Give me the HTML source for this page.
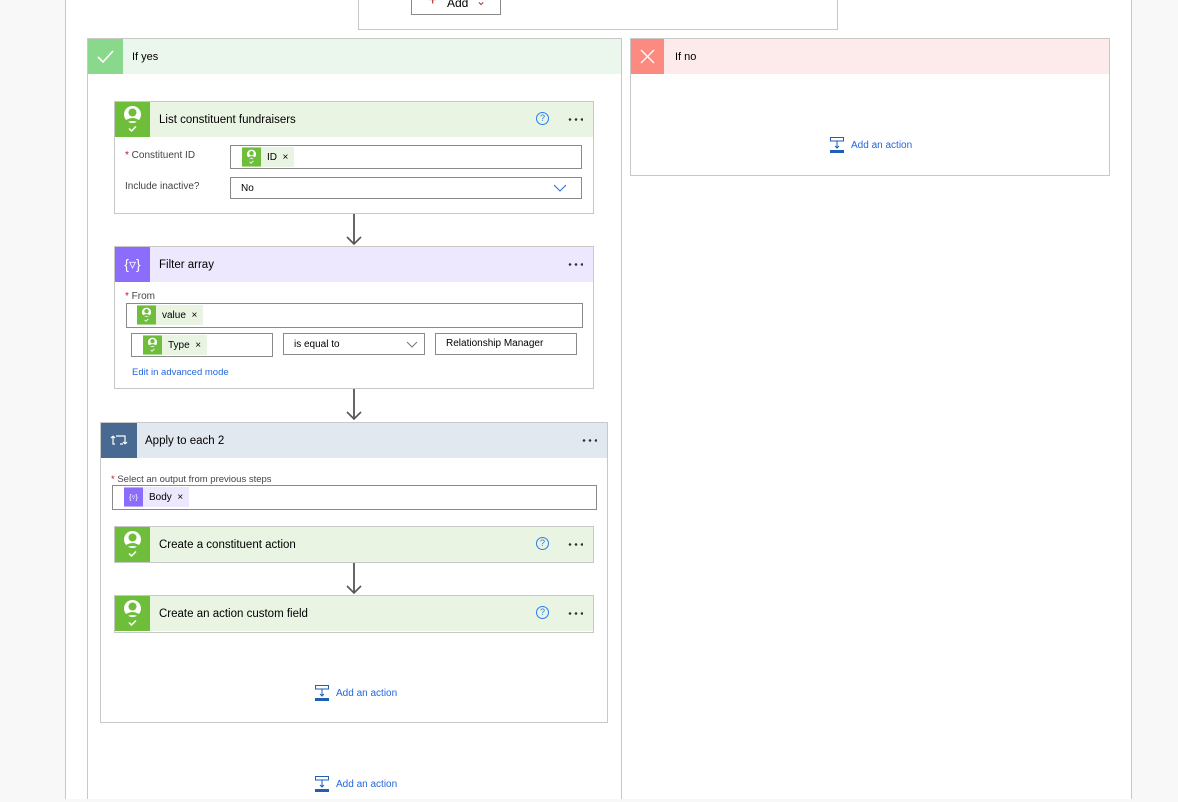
<!DOCTYPE html>
<html style="overflow:hidden;height:802px"><head><meta charset="utf-8"><style>
*{box-sizing:border-box;margin:0;padding:0}
body{width:1178px;height:802px;position:relative;overflow:hidden;background:#f8f8f8;font-family:"Segoe UI","Liberation Sans",sans-serif;font-size:12px;color:#000}
.a{position:absolute}
.box{position:absolute;border:1px solid #c8c8c8;background:#fff}
.hdr{position:absolute;left:0;top:0;right:0;height:35px}
.ic{position:absolute;left:0;top:0;width:35px;height:35px}
.t{position:absolute;left:44px;top:12px;font-size:11.5px}
.inp{position:absolute;border:1px solid #8a8a8a;background:#fff}
.lbl{position:absolute;font-size:10px;color:#444}
.req{color:#c50f1f}
.tok{position:absolute;height:20px;display:flex;align-items:center;font-size:10px}
.tok .ti{width:19px;height:20px}
.tok span{padding:0 6px}
.dots{position:absolute;right:10px;top:16px;width:16px;height:3px;background:radial-gradient(circle,#333 1.2px,transparent 1.4px) 0 0/6px 3px repeat-x}
.help{position:absolute;width:13px;height:13px;border:1.3px solid #2b7de9;border-radius:50%;color:#2b7de9;font-size:9px;text-align:center;line-height:11px}
.link{color:#2266dd;font-size:10px}
.vl{position:absolute;width:2px;background:#666}
</style></head><body>
<svg width="0" height="0" style="position:absolute"><defs>
<symbol id="p" viewBox="0 0 35 35"><rect width="35" height="35" fill="#6ebe3c"/><circle cx="17.5" cy="12.5" r="8.5" fill="#fff"/><circle cx="17.5" cy="10.5" r="4" fill="#6ebe3c"/><path d="M10.5 18.5 Q17.5 13.5 24.5 18.5 L24.5 21 Q17.5 17 10.5 21Z" fill="#6ebe3c"/><path d="M14 26.5 L16.5 29 L21 24.5" stroke="#fff" stroke-width="1.5" fill="none"/></symbol>
<symbol id="f" viewBox="0 0 35 35"><rect width="35" height="35" fill="#8c6cfa"/><text x="17.5" y="22" fill="#fff" font-size="14" text-anchor="middle" font-family="Liberation Sans">{▿}</text></symbol>
<symbol id="aa" viewBox="0 0 16 16"><rect x="1.5" y="0.5" width="13" height="3.5" fill="none" stroke="#1f5fb4"/><path d="M8 4V11M6 9L8 11L10 9" stroke="#1f5fb4" fill="none"/><rect x="1" y="13" width="14" height="3" fill="#1f5fb4"/></symbol>
</defs></svg>

<div class="a" style="left:65px;top:0;width:1067px;height:799px;background:#fff;border-left:1px solid #c8c8c8;border-right:1px solid #c8c8c8"></div>

<!-- top box -->
<div class="box" style="left:358px;top:-5px;width:480px;height:35px"></div>
<div class="a" style="left:411px;top:-20px;width:90px;height:35px;border:1px solid #8a8a8a;background:#fff;font-size:12px;line-height:12px;overflow:hidden">
 <span class="a" style="left:16px;top:14px;font-size:16px;color:#a33">+</span><span class="a" style="left:35px;top:16px">Add</span><span class="a" style="left:64px;top:14px;color:#a33">⌄</span></div>

<!-- If yes -->
<div class="box" style="left:87px;top:38px;width:535px;height:761px;border-bottom:none">
 <div class="hdr" style="background:#ebf6ec"><div class="ic" style="background:#8ad88c"><svg width="35" height="35"><path d="M10 18 L15 23 L25 12" stroke="#fff" stroke-width="1.6" fill="none"/></svg></div><div class="t" style="top:12px;font-size:11px">If yes</div></div>
</div>
<!-- If no -->
<div class="box" style="left:630px;top:38px;width:480px;height:138px">
 <div class="hdr" style="background:#fdebeb"><div class="ic" style="background:#fb8a80;width:33px"><svg width="33" height="35"><path d="M10 11 L23 24 M23 11 L10 24" stroke="#fff" stroke-width="1.3"/></svg></div><div class="t" style="top:12px;font-size:11px">If no</div></div>
 <svg class="a" style="left:198px;top:98px" width="16" height="16"><use href="#aa"/></svg>
 <div class="a link" style="left:220px;top:101px">Add an action</div>
</div>

<!-- List constituent fundraisers -->
<div class="box" style="left:114px;top:101px;width:480px;height:113px">
 <div class="hdr" style="background:#e9f4e3"><svg class="ic" width="35" height="35"><use href="#p"/></svg><div class="t">List constituent fundraisers</div>
 <div class="help" style="left:421px;top:10px">?</div><div class="dots"></div></div>
 <div class="lbl" style="left:10px;top:48px"><span class="req">*</span> Constituent ID</div>
 <div class="inp" style="left:115px;top:43px;width:352px;height:24px"><div class="tok" style="left:11px;top:1px;background:#e9f4e3"><svg class="ti" width="19" height="20"><use href="#p"/></svg><span>ID &nbsp;×</span></div></div>
 <div class="lbl" style="left:10px;top:79px">Include inactive?</div>
 <div class="inp" style="left:115px;top:75px;width:352px;height:22px;font-size:10px;padding:5px 10px">No<svg class="a" style="right:14px;top:6px" width="14" height="8"><path d="M1 1L7 7L13 1" stroke="#2b6cd9" fill="none"/></svg></div>
</div>
<div class="vl" style="left:353px;top:214px;height:30px"></div>
<svg class="a" style="left:346px;top:236px" width="16" height="10"><path d="M1 1L8 8L15 1" stroke="#555" stroke-width="1.6" fill="none"/></svg>

<!-- Filter array -->
<div class="box" style="left:114px;top:246px;width:480px;height:143px">
 <div class="hdr" style="background:#ede8fd"><svg class="ic" width="35" height="35"><use href="#f"/></svg><div class="t">Filter array</div><div class="dots"></div></div>
 <div class="lbl" style="left:10px;top:44px"><span class="req">*</span> From</div>
 <div class="inp" style="left:11px;top:56px;width:457px;height:25px"><div class="tok" style="left:10px;top:1px;background:#e9f4e3"><svg class="ti" width="19" height="20"><use href="#p"/></svg><span>value &nbsp;×</span></div></div>
 <div class="inp" style="left:16px;top:86px;width:142px;height:24px"><div class="tok" style="left:11px;top:1px;background:#e9f4e3"><svg class="ti" width="19" height="20"><use href="#p"/></svg><span>Type &nbsp;×</span></div></div>
 <div class="inp" style="left:168px;top:86px;width:142px;height:22px;font-size:10px;padding:5px 10px">is equal to<svg class="a" style="right:6px;top:7px" width="12" height="7"><path d="M1 1L6 6L11 1" stroke="#777" fill="none"/></svg></div>
 <div class="inp" style="left:320px;top:86px;width:142px;height:22px;font-size:10px;padding:4px 10px">Relationship Manager</div>
 <div class="a link" style="left:17px;top:120px;font-size:9.5px">Edit in advanced mode</div>
</div>
<div class="vl" style="left:353px;top:389px;height:30px"></div>
<svg class="a" style="left:346px;top:411px" width="16" height="10"><path d="M1 1L8 8L15 1" stroke="#555" stroke-width="1.6" fill="none"/></svg>

<!-- Apply to each -->
<div class="box" style="left:100px;top:422px;width:508px;height:301px">
 <div class="hdr" style="background:#e2e8f0"><div class="ic" style="background:#486991;width:36px"><svg width="36" height="35"><path d="M12 13V21H14M12 13L10 15M12 13L14 15M15 13H24V21M24 21L22 19M24 21L26 19M19 21H22" stroke="#fff" stroke-width="1.2" fill="none"/></svg></div><div class="t">Apply to each 2</div><div class="dots"></div></div>
 <div class="lbl" style="left:10px;top:51px;font-size:9.5px"><span class="req">*</span> Select an output from previous steps</div>
 <div class="inp" style="left:11px;top:62px;width:485px;height:25px"><div class="tok" style="left:11px;top:1px;background:#ede8fd"><svg class="ti" width="19" height="20"><use href="#f"/></svg><span>Body &nbsp;×</span></div></div>
 <svg class="a" style="left:213px;top:262px" width="16" height="16"><use href="#aa"/></svg>
 <div class="a link" style="left:235px;top:265px">Add an action</div>
</div>
<div class="box" style="left:114px;top:526px;width:480px;height:37px;border-color:#c8c8c8">
 <div class="hdr" style="background:#e9f4e3"><svg class="ic" width="35" height="35"><use href="#p"/></svg><div class="t">Create a constituent action</div><div class="help" style="left:421px;top:10px">?</div><div class="dots"></div></div>
</div>
<div class="vl" style="left:353px;top:563px;height:30px"></div>
<svg class="a" style="left:346px;top:585px" width="16" height="10"><path d="M1 1L8 8L15 1" stroke="#555" stroke-width="1.6" fill="none"/></svg>
<div class="box" style="left:114px;top:595px;width:480px;height:38px">
 <div class="hdr" style="background:#e9f4e3"><svg class="ic" width="35" height="35"><use href="#p"/></svg><div class="t">Create an action custom field</div><div class="help" style="left:421px;top:10px">?</div><div class="dots"></div></div>
</div>

<svg class="a" style="left:314px;top:776px" width="16" height="16"><use href="#aa"/></svg>
<div class="a link" style="left:336px;top:779px">Add an action</div>
<div class="a" style="left:0;top:799px;width:1178px;height:3px;background:#f8f8f8"></div>
</body></html>
